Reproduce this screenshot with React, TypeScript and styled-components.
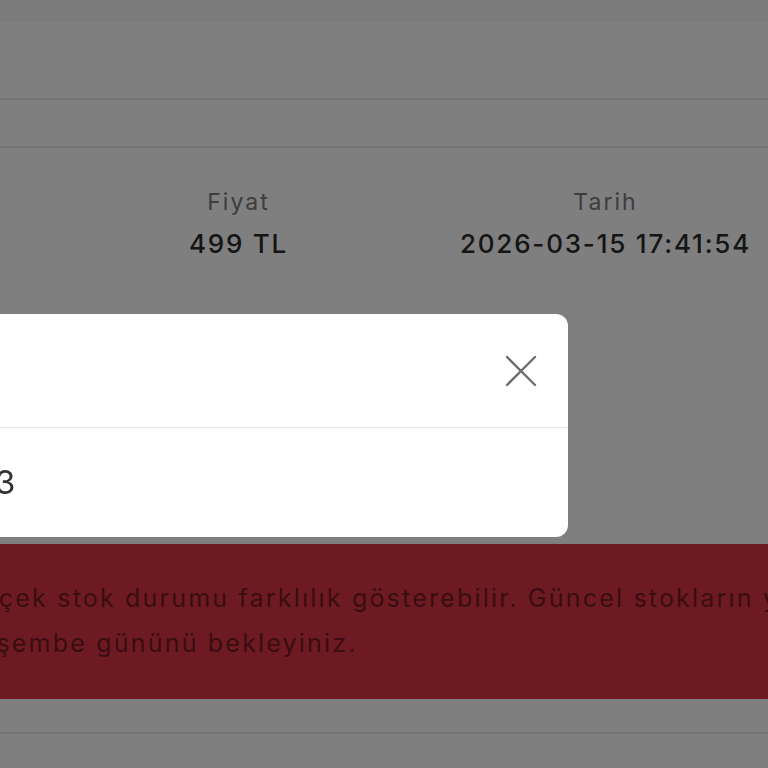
import React from "react";
import styled, { createGlobalStyle } from "styled-components";

const GlobalStyle = createGlobalStyle`
  html, body {
    margin: 0;
    padding: 0;
    background: #ffffff;
    overflow: hidden;
  }
  body {
    font-family: Inter, "Noto Sans", "Liberation Sans", sans-serif;
  }
`;

const Page = styled.div`
  width: 1101px;
  margin-left: -312px;
  background: #ffffff;
  min-height: 768px;
`;

const TopBar = styled.div`
  height: 22px;
  background: #f6f6f6;
`;

const Band = styled.div<{ h: number }>`
  height: ${(p) => p.h}px;
  border-bottom: 2px solid #ececec;
`;

const InfoRow = styled.div`
  display: grid;
  grid-template-columns: repeat(3, 367px);
  padding-top: 39px;
`;

const InfoCell = styled.div`
  display: flex;
  flex-direction: column;
  align-items: center;
  gap: 9px;
`;

const InfoLabel = styled.div`
  font-size: 23px;
  line-height: 30px;
  letter-spacing: 2px;
  color: #7a7a7a;
`;

const InfoValue = styled.div`
  font-size: 26px;
  line-height: 36px;
  font-weight: 500;
  letter-spacing: 1.8px;
  color: #2a2a2a;
`;

const Spacer = styled.div<{ h: number }>`
  height: ${(p) => p.h}px;
`;

const Banner = styled.div`
  background: #dc3545;
  padding: 32px 0 33px 262px;
  font-size: 25px;
  line-height: 45px;
  letter-spacing: 2.2px;
  color: #741b25;
  white-space: nowrap;
`;

const Overlay = styled.div`
  position: fixed;
  inset: 0;
  background: rgba(0, 0, 0, 0.5);
`;

const Modal = styled.div`
  position: fixed;
  top: 314px;
  left: -332px;
  width: 900px;
  height: 223px;
  background: #ffffff;
  border-radius: 12px;
  display: flex;
  flex-direction: column;
  overflow: hidden;
`;

const ModalHeader = styled.div`
  height: 113px;
  border-bottom: 1px solid #e6e6e6;
  display: flex;
  align-items: center;
  justify-content: space-between;
  padding: 0 31px 0 32px;
`;

const ModalTitle = styled.div`
  font-size: 28px;
  font-weight: 600;
  color: #222;
`;

const CloseButton = styled.button`
  width: 32px;
  height: 32px;
  padding: 0;
  border: none;
  background: transparent;
  display: flex;
  align-items: center;
  justify-content: center;
  cursor: pointer;
`;

const ModalBody = styled.div`
  flex: 1;
  display: flex;
  align-items: center;
  padding-left: 32px;
  padding-bottom: 2px;
`;

const BodyLabel = styled.span`
  width: 295px;
  text-align: right;
  font-size: 32px;
  color: #333;
`;

const BodyValue = styled.span`
  font-size: 33px;
  color: #333;
`;

const info = [
  { label: "Stok", value: "3" },
  { label: "Fiyat", value: "499 TL" },
  { label: "Tarih", value: "2026-03-15 17:41:54" },
];

export default function App() {
  return (
    <>
      <GlobalStyle />
      <Page>
        <TopBar />
        <Band h={76} />
        <Band h={46} />
        <InfoRow>
          {info.map((i) => (
            <InfoCell key={i.label}>
              <InfoLabel>{i.label}</InfoLabel>
              <InfoValue>{i.value}</InfoValue>
            </InfoCell>
          ))}
        </InfoRow>
        <Spacer h={282} />
        <Banner>
          Gerçek stok durumu farklılık gösterebilir. Güncel stokların yansıması için
          <br />
          Perşembe gününü bekleyiniz.
        </Banner>
        <Band h={33} />
      </Page>
      <Overlay />
      <Modal>
        <ModalHeader>
          <ModalTitle>Stok Detayı</ModalTitle>
          <CloseButton aria-label="Kapat">
            <svg width="32" height="32" viewBox="0 0 32 32">
              <path
                d="M2 2 L30 30 M30 2 L2 30"
                stroke="#6e6e6e"
                strokeWidth="2.4"
                strokeLinecap="round"
              />
            </svg>
          </CloseButton>
        </ModalHeader>
        <ModalBody>
          <BodyLabel>Adet:&nbsp;</BodyLabel>
          <BodyValue>3</BodyValue>
        </ModalBody>
      </Modal>
    </>
  );
}
